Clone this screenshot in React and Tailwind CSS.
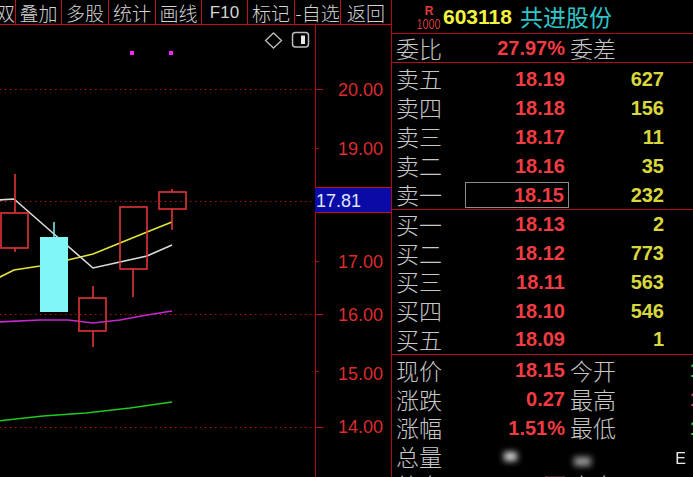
import React from 'react';

const NUM = "font-['Liberation_Sans',Arial,sans-serif]";
const CJK = "font-['Noto_Sans_CJK_SC',sans-serif]";

const tools = [
  { label: '双', w: 'w-[16px] justify-end', border: true },
  { label: '叠加', w: 'w-[46px] justify-center', border: true },
  { label: '多股', w: 'w-[47px] justify-center', border: true },
  { label: '统计', w: 'w-[47px] justify-center', border: true },
  { label: '画线', w: 'w-[46px] justify-center', border: true },
  { label: 'F10', w: 'w-[46px] justify-center', border: true, num: true },
  { label: '标记', w: 'w-[47px] justify-center', border: true },
  { label: '-自选', w: 'w-[46px] justify-center', border: true },
  { label: '返回', w: 'w-[50px] justify-center', border: false },
];

const sells = [
  ['卖五', '18.19', '627'],
  ['卖四', '18.18', '156'],
  ['卖三', '18.17', '11'],
  ['卖二', '18.16', '35'],
  ['卖一', '18.15', '232'],
];

const buys = [
  ['买一', '18.13', '2'],
  ['买二', '18.12', '773'],
  ['买三', '18.11', '563'],
  ['买四', '18.10', '546'],
  ['买五', '18.09', '1'],
];

// candles: wick x, high, low, body left, body top/bottom
const candles = [
  { x: 15, hi: 174, lo: 252, bx: 1, top: 213, bot: 248 },
  { x: 54, hi: 222, lo: 312, bx: 40, top: 237, bot: 312, down: true },
  { x: 93, hi: 286, lo: 347, bx: 79, top: 298, bot: 331 },
  { x: 133, hi: 207, lo: 297, bx: 120, top: 207, bot: 269 },
  { x: 172, hi: 189, lo: 230, bx: 159, top: 192, bot: 209 },
];

const axis = [
  { y: 89, t: '20.00' },
  { y: 148, t: '19.00' },
  { y: 261, t: '17.00' },
  { y: 314, t: '16.00' },
  { y: 373, t: '15.00' },
  { y: 426, t: '14.00' },
];

function Toolbar() {
  return (
    <div className="flex h-[25px] shrink-0 border-b border-[#c0101e] overflow-hidden">
      {tools.map((t) => (
        <div
          key={t.label}
          className={`flex items-center ${t.w} shrink-0 overflow-hidden whitespace-nowrap ${t.border ? 'border-r border-[#c0101e]' : ''}`}
        >
          <span className={`${t.num ? `${NUM} text-[17px]` : `${CJK} text-[19px] font-light`} leading-none text-[#d4d4d4]`}>
            {t.label}
          </span>
        </div>
      ))}
    </div>
  );
}

function Chart() {
  const red = '#e0343a';
  return (
    <div className="relative flex-1">
      <svg className="absolute inset-0" width="391" height="452" viewBox="0 25 391 452">
        {/* grid */}
        {[89, 201, 314, 427].map((y) => (
          <g key={y}>
            <line x1="0" y1={y + 0.5} x2="315" y2={y + 0.5} stroke="#b01414" strokeDasharray="1.5 3.5" />
            <line x1="315" y1={y + 0.5} x2="323" y2={y + 0.5} stroke="#b01414" />
          </g>
        ))}
        {[148, 261, 371].map((y) => (
          <line key={y} x1="315" y1={y + 0.5} x2="319" y2={y + 0.5} stroke="#b01414" />
        ))}
        <line x1="315.5" y1="25" x2="315.5" y2="477" stroke="#b80c14" />

        {/* moving averages */}
        <polyline fill="none" stroke="#22c822" strokeWidth="1.6" points="-2,421 43,416 86,413 130,408 172,402" />
        <polyline fill="none" stroke="#c628d0" strokeWidth="1.6" points="-2,322 40,320 68,320 93,323 120,320 147,315 172,311" />
        <polyline fill="none" stroke="#e4e43a" strokeWidth="1.6" points="-2,278 14,270 40,266 68,260 93,254 120,243 147,232 172,222" />
        <polyline fill="none" stroke="#dcdcdc" strokeWidth="1.6" points="-2,200 14,199 54,234 93,268 120,262 147,256 172,245" />

        {/* candles */}
        {candles.map((c) =>
          c.down ? (
            <g key={c.x}>
              <line x1={c.x} y1={c.hi} x2={c.x} y2={c.top} stroke="#80f6f6" strokeWidth="1.5" />
              <rect x={c.bx} y={c.top} width="28" height={c.bot - c.top} fill="#80f6f6" />
            </g>
          ) : (
            <g key={c.x}>
              <line x1={c.x} y1={c.hi} x2={c.x} y2={c.top} stroke={red} strokeWidth="1.6" />
              <line x1={c.x} y1={c.bot} x2={c.x} y2={c.lo} stroke={red} strokeWidth="1.6" />
              <rect x={c.bx} y={c.top} width="27" height={c.bot - c.top} fill="none" stroke={red} strokeWidth="1.6" />
            </g>
          )
        )}

        {/* markers */}
        <rect x="130" y="51" width="4" height="4" fill="#ff22ff" />
        <rect x="169" y="51" width="4" height="4" fill="#ff22ff" />
        <polygon points="273.5,33 281.5,40.5 273.5,48 265.5,40.5" fill="none" stroke="#bdbdbd" strokeWidth="1.3" />
        <rect x="292.5" y="32.5" width="16" height="14.5" rx="3" fill="none" stroke="#bdbdbd" strokeWidth="1.5" />
        <rect x="301" y="35.5" width="4" height="8.5" fill="#e8e8e8" />

        {/* axis labels */}
        {axis.map((a) => (
          <text
            key={a.t}
            x="383"
            y={a.y + 6.5}
            textAnchor="end"
            fill="#dc2c30"
            fontSize="18"
            fontFamily="Liberation Sans, Arial, sans-serif"
          >
            {a.t}
          </text>
        ))}
        <rect x="315" y="188" width="76" height="24" fill="#0a0aa6" />
        <line x1="315" y1="187.5" x2="391" y2="187.5" stroke="#c8101c" />
        <line x1="315" y1="212.5" x2="391" y2="212.5" stroke="#c8101c" />
        <text x="316" y="206.5" fill="#dfe4ff" fontSize="18" fontFamily="Liberation Sans, Arial, sans-serif">
          17.81
        </text>
      </svg>
    </div>
  );
}

function BookRow({ label, price, vol, boxed, h }) {
  return (
    <div className={`flex items-center ${h} shrink-0`}>
      <div className={`w-[69px] shrink-0 ${CJK} text-[23px] font-light leading-none text-[#c8c8c8]`}>{label}</div>
      <div
        className={`w-[104px] h-[26px] shrink-0 flex items-center justify-end pr-[4px] ${
          boxed ? 'border border-[#8c8c8c]' : ''
        }`}
      >
        <span className={`${NUM} text-[20px] font-bold leading-none text-[#f03c42]`}>{price}</span>
      </div>
      <div className={`w-[95px] shrink-0 text-right ${NUM} text-[20px] font-bold leading-none text-[#d8d83c]`}>
        {vol}
      </div>
    </div>
  );
}

function QuoteRow({ label, value, label2, value2, color2, blur }) {
  return (
    <div className="flex items-center h-[28.75px] shrink-0">
      <div className={`w-[69px] shrink-0 ${CJK} text-[23px] font-light leading-none text-[#c8c8c8]`}>{label}</div>
      <div className="w-[104px] shrink-0 flex items-center justify-end pr-[4px]">
        {blur ? (
          <span className="inline-block w-[13px] h-[9px] mr-[48px] bg-[#d8d8d8] blur-[3px]" />
        ) : (
          <span className={`${NUM} text-[20px] font-bold leading-none text-[#f03c42]`}>{value}</span>
        )}
      </div>
      <div className={`w-[50px] shrink-0 pl-[1px] ${CJK} text-[23px] font-light leading-none text-[#c8c8c8] whitespace-nowrap`}>
        {blur ? <span className="inline-block w-[17px] h-[9px] ml-[4px] bg-[#9a9a9a] blur-[3px]" /> : label2}
      </div>
      <div className={`w-[121px] shrink-0 text-right ${NUM} text-[20px] font-bold leading-none ${color2}`}>
        {blur ? <span className={`${NUM} text-[16px] font-normal text-[#e8e8e8] mr-[54px] blur-[0.6px]`}>E</span> : value2}
      </div>
    </div>
  );
}

function Panel() {
  return (
    <div className="w-[302px] shrink-0 border-l border-[#b40a16] flex flex-col overflow-hidden">
      {/* header */}
      <div className="h-[34px] shrink-0 border-b border-[#b40a16] flex items-center pl-[25px]">
        <div className="w-[24px] flex flex-col items-center pt-[2px]">
          <span className={`${NUM} text-[12px] font-bold leading-[12px] text-[#e03c3c]`}>R</span>
          <span className={`${NUM} text-[15px] leading-[14px] text-[#d83a3a] scale-x-[0.72]`}>1000</span>
        </div>
        <span className={`ml-[2px] ${NUM} text-[21px] font-bold leading-none text-[#f4f43c]`}>603118</span>
        <span className={`ml-[8px] ${CJK} text-[23px] leading-none text-[#2ec6c8]`}>共进股份</span>
      </div>

      {/* 委比 */}
      <div className="h-[29px] shrink-0 border-b border-[#b40a16] flex items-center pl-[4px]">
        <div className={`w-[69px] shrink-0 ${CJK} text-[23px] font-light leading-none text-[#c8c8c8]`}>委比</div>
        <div className="w-[104px] shrink-0 flex justify-end pr-[4px]">
          <span className={`${NUM} text-[20px] font-bold leading-none text-[#f03c42]`}>27.97%</span>
        </div>
        <div className={`pl-[1px] ${CJK} text-[23px] font-light leading-none text-[#c8c8c8]`}>委差</div>
      </div>

      {/* sells */}
      <div className="h-[147px] shrink-0 border-b border-[#b40a16] pt-[1px] pl-[4px] flex flex-col">
        {sells.map(([l, p, v]) => (
          <BookRow key={l} label={l} price={p} vol={v} boxed={l === '卖一'} h="h-[29px]" />
        ))}
      </div>

      {/* buys */}
      <div className="h-[145px] shrink-0 border-b border-[#b40a16] pl-[4px] flex flex-col">
        {buys.map(([l, p, v]) => (
          <BookRow key={l} label={l} price={p} vol={v} h="h-[28.75px]" />
        ))}
      </div>

      {/* quote */}
      <div className="flex-1 pt-[1px] pl-[4px] flex flex-col">
        <QuoteRow label="现价" value="18.15" label2="今开" value2="17.85" color2="text-[#22d822]" />
        <QuoteRow label="涨跌" value="0.27" label2="最高" value2="18.28" color2="text-[#f03c42]" />
        <QuoteRow label="涨幅" value="1.51%" label2="最低" value2="17.80" color2="text-[#22d822]" />
        <QuoteRow label="总量" blur color2="text-[#e8e8e8]" />
        <QuoteRow label="外盘" value="5.62万" label2="内盘" value2="4.91万" color2="text-[#22d822]" />
      </div>
    </div>
  );
}

export default function App() {
  return (
    <div className="w-[693px] h-[477px] bg-black overflow-hidden flex">
      <div className="w-[391px] shrink-0 flex flex-col">
        <Toolbar />
        <Chart />
      </div>
      <Panel />
    </div>
  );
}
